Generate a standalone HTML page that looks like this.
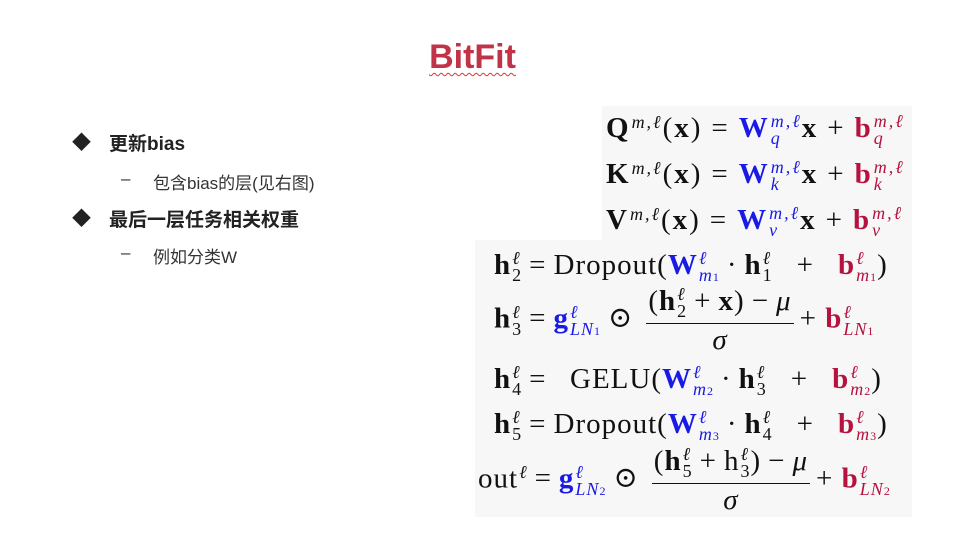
<!DOCTYPE html>
<html><head><meta charset="utf-8"><style>
body{margin:0;width:965px;height:541px;background:#fff;position:relative;overflow:hidden;font-family:"Liberation Sans","Noto Sans CJK SC",sans-serif}
.a{position:absolute;white-space:nowrap}
.t{left:-10px;width:965px;text-align:center;top:38px;font-size:34px;font-weight:bold;color:#c13448}
.t span{text-decoration:underline wavy #d33;text-decoration-thickness:1px;text-underline-offset:4px}
.l1{font-size:19px;font-weight:bold;color:#222}
.l2{font-size:17px;color:#333}
.box{position:absolute;background:#f7f7f7}
.m{position:absolute;white-space:nowrap;font-family:"Liberation Serif","DejaVu Serif",serif;font-size:29px;color:#111;line-height:1;letter-spacing:1px}
.q{letter-spacing:2px}
.b{font-weight:bold}
.bl{color:#1a1ae6}.rd{color:#b5123f}
.ss{display:inline-flex;flex-direction:column;vertical-align:middle;font-size:18px;line-height:0.95;margin-left:1px;text-align:left}
.d{font-size:12px;font-style:normal}
.fr{display:inline-flex;flex-direction:column;vertical-align:middle;text-align:center;margin:0 6px}
.fr>span:first-child{border-bottom:1px solid #111;padding:0 2px 3px}
.fr>span:last-child{padding-top:2px}
.o{margin:0 7px}
.q .o{margin:0 9px}
i{font-style:italic}
</style></head><body>
<div class="a t"><span>BitFit</span></div>
<div class="a l1" style="left:72px;top:128px">◆</div>
<div class="a l1" style="left:109px;top:129px">更新bias</div>
<div class="a l2" style="left:121px;top:169px">–</div>
<div class="a l2" style="left:153px;top:169px">包含bias的层(见右图)</div>
<div class="a l1" style="left:72px;top:204px">◆</div>
<div class="a l1" style="left:109px;top:205px">最后一层任务相关权重</div>
<div class="a l2" style="left:121px;top:243px">–</div>
<div class="a l2" style="left:153px;top:243px">例如分类W</div>

<div class="box" style="left:602px;top:106px;width:310px;height:136px"></div>
<div class="box" style="left:475px;top:240px;width:437px;height:277px"></div>

<div class="m q" style="left:606px;top:113px"><span class="b">Q</span><span class="ss" style="vertical-align:9px"><i>m,ℓ</i></span>(<span class="b">x</span>)<span class="o">=</span><span class="b bl">W</span><span class="ss bl"><i>m,ℓ</i><i>q</i></span><span class="b">x</span><span class="o">+</span><span class="b rd">b</span><span class="ss rd"><i>m,ℓ</i><i>q</i></span></div>
<div class="m q" style="left:606px;top:159px"><span class="b">K</span><span class="ss" style="vertical-align:9px"><i>m,ℓ</i></span>(<span class="b">x</span>)<span class="o">=</span><span class="b bl">W</span><span class="ss bl"><i>m,ℓ</i><i>k</i></span><span class="b">x</span><span class="o">+</span><span class="b rd">b</span><span class="ss rd"><i>m,ℓ</i><i>k</i></span></div>
<div class="m q" style="left:606px;top:205px"><span class="b">V</span><span class="ss" style="vertical-align:9px"><i>m,ℓ</i></span>(<span class="b">x</span>)<span class="o">=</span><span class="b bl">W</span><span class="ss bl"><i>m,ℓ</i><i>v</i></span><span class="b">x</span><span class="o">+</span><span class="b rd">b</span><span class="ss rd"><i>m,ℓ</i><i>v</i></span></div>

<div class="m" style="left:494px;top:250px"><span class="b">h</span><span class="ss"><i>ℓ</i>2</span><span class="o">=</span>Dropout(<span class="b bl">W</span><span class="ss bl"><i>ℓ</i><span><i>m</i><span class="d">1</span></span></span><span class="o">·</span><span class="b">h</span><span class="ss"><i>ℓ</i>1</span><span class="o" style="margin:0 24px">+</span><span class="b rd">b</span><span class="ss rd"><i>ℓ</i><span><i>m</i><span class="d">1</span></span></span>)</div>
<div class="m" style="left:494px;top:286px"><span class="b">h</span><span class="ss"><i>ℓ</i>3</span><span class="o">=</span><span class="b bl">g</span><span class="ss bl"><i>ℓ</i><span><i>LN</i><span class="d">1</span></span></span><span class="o">⊙</span><span class="fr"><span>(<span class="b">h</span><span class="ss"><i>ℓ</i>2</span><span class="o">+</span><span class="b">x</span>)<span class="o">−</span><i>μ</i></span><span><i>σ</i></span></span>+ <span class="b rd">b</span><span class="ss rd"><i>ℓ</i><span><i>LN</i><span class="d">1</span></span></span></div>
<div class="m" style="left:494px;top:364px"><span class="b">h</span><span class="ss"><i>ℓ</i>4</span><span class="o">=</span>&nbsp; GELU(<span class="b bl">W</span><span class="ss bl"><i>ℓ</i><span><i>m</i><span class="d">2</span></span></span><span class="o">·</span><span class="b">h</span><span class="ss"><i>ℓ</i>3</span><span class="o" style="margin:0 24px">+</span><span class="b rd">b</span><span class="ss rd"><i>ℓ</i><span><i>m</i><span class="d">2</span></span></span>)</div>
<div class="m" style="left:494px;top:409px"><span class="b">h</span><span class="ss"><i>ℓ</i>5</span><span class="o">=</span>Dropout(<span class="b bl">W</span><span class="ss bl"><i>ℓ</i><span><i>m</i><span class="d">3</span></span></span><span class="o">·</span><span class="b">h</span><span class="ss"><i>ℓ</i>4</span><span class="o" style="margin:0 24px">+</span><span class="b rd">b</span><span class="ss rd"><i>ℓ</i><span><i>m</i><span class="d">3</span></span></span>)</div>
<div class="m" style="left:478px;top:446px">out<span class="ss" style="vertical-align:9px"><i>ℓ</i></span><span class="o">=</span><span class="b bl">g</span><span class="ss bl"><i>ℓ</i><span><i>LN</i><span class="d">2</span></span></span><span class="o">⊙</span><span class="fr"><span>(<span class="b">h</span><span class="ss"><i>ℓ</i>5</span><span class="o">+</span>h<span class="ss"><i>ℓ</i>3</span>)<span class="o">−</span><i>μ</i></span><span><i>σ</i></span></span>+ <span class="b rd">b</span><span class="ss rd"><i>ℓ</i><span><i>LN</i><span class="d">2</span></span></span></div>
</body></html>
